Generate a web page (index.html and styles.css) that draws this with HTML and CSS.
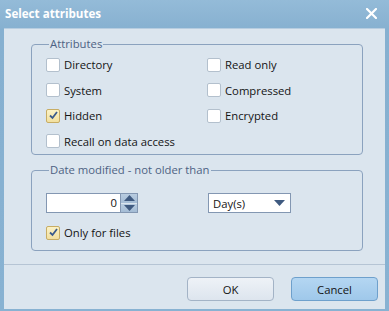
FILE: index.html
```html
<!DOCTYPE html>
<html>
<head>
<meta charset="utf-8">
<link rel="stylesheet" href="styles.css">
</head>
<body>
<div class="window">
  <div class="titlebar">
    <span class="title">Select attributes</span>
    <svg class="close" width="11" height="11" viewBox="0 0 11 11"><path d="M1 1 L10 10 M10 1 L1 10" stroke="#fff" stroke-width="2.2" stroke-linecap="square"/></svg>
  </div>
  <div class="client">
    <div class="body">
      <fieldset class="group attrs">
        <legend>Attributes</legend>
        <div class="grid">
          <label class="chk"><span class="box"></span>Directory</label>
          <label class="chk"><span class="box"></span>Read only</label>
          <label class="chk"><span class="box"></span>System</label>
          <label class="chk"><span class="box"></span>Compressed</label>
          <label class="chk"><span class="box checked"><svg width="11" height="11" viewBox="0 0 11 11"><path d="M2 5.5 L4.5 8 L9 2" fill="none" stroke="#3b5b8c" stroke-width="1.8"/></svg></span>Hidden</label>
          <label class="chk"><span class="box"></span>Encrypted</label>
          <label class="chk wide"><span class="box"></span>Recall on data access</label>
        </div>
      </fieldset>
      <fieldset class="group date">
        <legend>Date modified - not older than</legend>
        <div class="daterow">
          <div class="spin">
            <div class="spinval">0</div>
            <div class="spinbtns">
              <span class="sb"><svg width="11" height="6" viewBox="0 0 11 6"><path d="M0 6 L5.5 0 L11 6Z" fill="#3f5a80"/></svg></span>
              <span class="sb"><svg width="11" height="6" viewBox="0 0 11 6"><path d="M0 0 L11 0 L5.5 6Z" fill="#3f5a80"/></svg></span>
            </div>
          </div>
          <div class="combo">
            <span>Day(s)</span>
            <svg width="11" height="6" viewBox="0 0 11 6"><path d="M0 0 L11 0 L5.5 6Z" fill="#3f5a80"/></svg>
          </div>
        </div>
        <label class="chk"><span class="box checked"><svg width="11" height="11" viewBox="0 0 11 11"><path d="M2 5.5 L4.5 8 L9 2" fill="none" stroke="#3b5b8c" stroke-width="1.8"/></svg></span>Only for files</label>
      </fieldset>
    </div>
    <div class="footer">
      <button class="btn">OK</button>
      <button class="btn default">Cancel</button>
    </div>
  </div>
</div>
</body>
</html>
```
FILE: styles.css
```css
html, body {
  margin: 0;
  padding: 0;
  background: #8fb6d4;
}
.window {
  width: 389px;
  height: 311px;
  box-sizing: border-box;
  padding: 0 4px 2px 4px;
  display: flex;
  flex-direction: column;
  background: linear-gradient(#94bbd8, #86b0d0 30px, #88b2d2);
  font-family: "Open Sans", sans-serif;
  font-size: 11.3px;
  color: #141414;
}
.titlebar {
  height: 28px;
  flex: none;
  display: flex;
  align-items: center;
  justify-content: space-between;
  padding: 0 8px 0 1px;
}
.title {
  color: #fff;
  font-weight: bold;
  font-size: 11.6px;
  margin-top: -1px;
}
.close {
  margin-top: -1px;
}
.client {
  flex: 1;
  background: #dbe5ee;
  border-top: 1px solid #b7cde0;
  display: flex;
  flex-direction: column;
}
.body {
  flex: 1;
  padding: 7px 22px 0 27px;
  display: flex;
  flex-direction: column;
  gap: 7px;
  border-bottom: 1px solid #b5c4d4;
}
.group {
  margin: 0;
  border: 1px solid #8ba2be;
  border-radius: 4px;
  padding: 0 14px;
}
.group legend {
  padding: 0 1px;
  margin-left: 3px;
  color: #4d6283;
  line-height: 16px;
}
.grid {
  display: grid;
  grid-template-columns: 161px 1fr;
  grid-auto-rows: 25.5px;
}
.wide {
  grid-column: 1 / 2;
}
.chk {
  display: flex;
  align-items: center;
  gap: 4px;
  white-space: nowrap;
}
.box {
  width: 12px;
  height: 12px;
  border: 1px solid #b3c0cd;
  border-radius: 2px;
  background: #fff;
  display: flex;
  align-items: center;
  justify-content: center;
  flex: none;
}
.box.checked {
  background: linear-gradient(#fbf2c6, #f2e0a0);
  border-color: #c8ad64;
}
.date {
  padding-bottom: 9px;
}
.date .chk {
  height: 17px;
}
.daterow {
  display: flex;
  align-items: center;
  gap: 70px;
  margin-top: 15px;
  margin-bottom: 11px;
}
.spin {
  display: flex;
  height: 20px;
}
.spinval {
  width: 75px;
  box-sizing: border-box;
  height: 20px;
  border: 1px solid #8397b2;
  background: #fff;
  text-align: right;
  padding-right: 3px;
  line-height: 18px;
}
.spinbtns {
  width: 17px;
  display: flex;
  flex-direction: column;
  border: 1px solid #8397b2;
  border-left: none;
  box-sizing: border-box;
  height: 20px;
}
.sb {
  flex: 1;
  background: linear-gradient(#b8cce0, #a4bcd5);
  display: flex;
  align-items: center;
  justify-content: center;
}
.sb + .sb {
  border-top: 1px solid #dbe5ee;
}
.combo {
  width: 83px;
  height: 20px;
  box-sizing: border-box;
  border: 1px solid #8397b2;
  background: #fff;
  display: flex;
  align-items: center;
  justify-content: space-between;
  padding: 0 5px 0 4px;
}
.footer {
  height: 44px;
  flex: none;
  display: flex;
  justify-content: flex-end;
  align-items: flex-start;
  gap: 17px;
  padding: 12px 7px 0 0;
  box-sizing: border-box;
}
.btn {
  width: 87px;
  height: 24px;
  border: 1px solid #a3b3c6;
  border-radius: 4px;
  background: linear-gradient(#eef2f7, #dde5ee);
  font-family: inherit;
  font-size: 11.3px;
  color: #141414;
  padding: 0;
}
.btn.default {
  background: linear-gradient(#b4d6f2, #9fc8ea);
  border-color: #6ea0cc;
}
```
